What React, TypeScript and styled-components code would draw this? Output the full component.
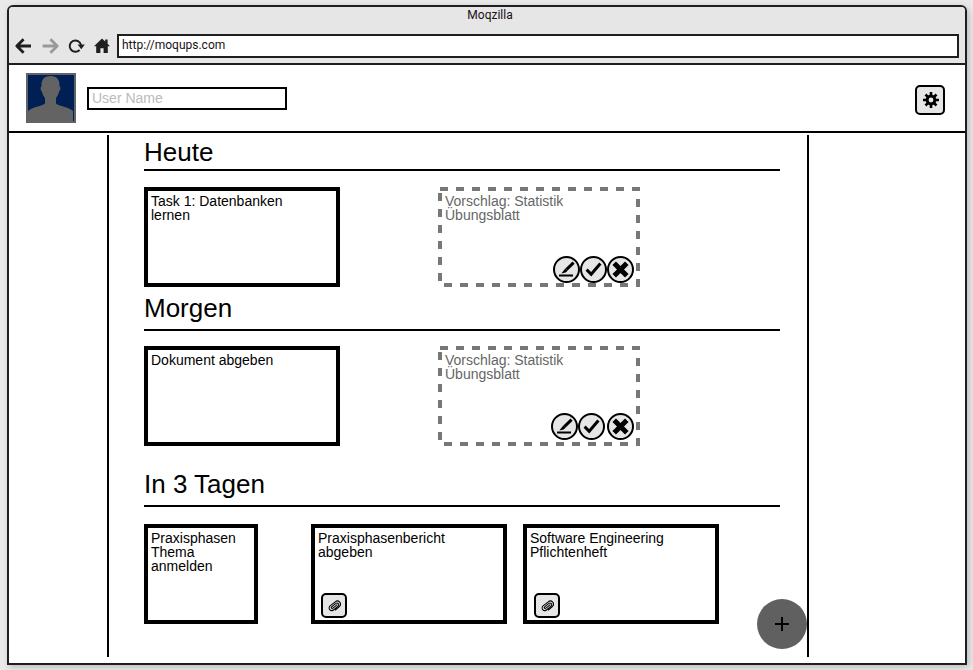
import React from "react";
import styled, { createGlobalStyle } from "styled-components";

const GlobalStyle = createGlobalStyle`
  *, *::before, *::after { box-sizing: border-box; }
  body {
    margin: 0;
    background: #e9e9e9;
    color: #000;
    font-family: "Liberation Sans", Arial, sans-serif;
    font-size: 14px;
  }
  button { padding: 0; color: inherit; font: inherit; cursor: pointer; }
`;

const Page = styled.div`
  display: flex;
  min-height: 100vh;
  padding: 5px 6px 5px 7px;
`;

const BrowserWindow = styled.div`
  flex: 1;
  display: flex;
  flex-direction: column;
  overflow: hidden;
  background: #fff;
  border: 2px solid #1f1f1f;
  border-radius: 6px 6px 0 0;
  box-shadow: 2px 2px 6px rgba(0, 0, 0, 0.2);
`;

const Chrome = styled.div`
  background: #e6e6e6;
  border-bottom: 2px solid #1f1f1f;
  font-family: Roboto, sans-serif;
  font-size: 12px;
  color: #1a1020;
`;

const WindowTitle = styled.div`
  height: 27px;
  padding-left: 6px;
  line-height: 16px;
  text-align: center;
`;

const Toolbar = styled.div`
  display: flex;
  align-items: center;
  padding: 0 6px 5px 7px;
`;

const NavButtons = styled.div`
  display: flex;
  gap: 10px;
  margin-right: 7px;
`;

const NavButton = styled.button<{ $tone?: string }>`
  display: flex;
  width: 16px;
  height: 16px;
  border: 0;
  background: none;
  color: ${(p) => p.$tone ?? "#1f1f1f"};

  svg { overflow: visible; }
`;

const AddressInput = styled.input`
  flex: 1;
  min-width: 0;
  height: 24px;
  padding: 0 3px 2px;
  border: 2px solid #1f1f1f;
  border-radius: 0;
  background: #fff;
  color: #1a1020;
  font: 12px Roboto, sans-serif;
  outline: none;
`;

const AppHeader = styled.header`
  display: flex;
  align-items: center;
  height: 68px;
  padding: 0 20px 0 17px;
  border-bottom: 2px solid #000;
`;

const Avatar = styled.svg`
  width: 50px;
  height: 50px;
  margin-right: 11px;
`;

const NameInput = styled.input`
  width: 200px;
  height: 23px;
  padding: 0 3px;
  border: 2px solid #000;
  border-radius: 0;
  background: #fff;
  font: 14px "Liberation Sans", Arial, sans-serif;
  outline: none;
  &::placeholder { color: #bbb; opacity: 1; }
`;

const SettingsButton = styled.button`
  display: grid;
  place-items: center;
  width: 30px;
  height: 30px;
  margin: 4px 0 0 auto;
  border: 2px solid #000;
  border-radius: 5px;
  background: #e6e6e6;
`;

const Main = styled.main`
  flex: 1;
  display: flex;
  padding: 2px 156px 6px 98px;
`;

const Board = styled.div`
  position: relative;
  flex: 1;
  padding: 0 27px 33px 35px;
  border: solid #000;
  border-width: 0 2px;
`;

const Heading = styled.h2<{ $above?: number; $below?: number; $gap: number }>`
  margin: 0 0 ${(p) => p.$gap}px;
  padding: ${(p) => p.$above ?? 0}px 0 ${(p) => p.$below ?? 0}px;
  border-bottom: 2px solid #000;
  font-size: 26px;
  font-weight: 400;
  line-height: 34px;
`;

const CardRow = styled.div`
  display: flex;
`;

const Card = styled.article<{ $width: number; $lead?: number }>`
  display: flex;
  flex-direction: column;
  justify-content: space-between;
  width: ${(p) => p.$width}px;
  min-height: 100px;
  margin-left: ${(p) => p.$lead ?? 0}px;
  padding: 3px 3px 2px;
  border: 4px solid #000;
`;

const dashX = "repeating-linear-gradient(90deg, #777 0 8px, transparent 8px 16px)";
const dashY = "repeating-linear-gradient(180deg, #777 0 8px, transparent 8px 16px)";

const SuggestionCard = styled(Card)`
  padding: 7px 6px 4px 7px;
  border: 0;
  color: #666;
  background:
    ${dashX} 2px 0 / 100% 4px no-repeat,
    ${dashX} 6px 100% / 100% 4px no-repeat,
    ${dashY} 0 6px / 4px 100% no-repeat,
    ${dashY} 100% 12px / 4px 100% no-repeat;
`;

const CardText = styled.p`
  max-width: 150px;
  margin: 0;
  line-height: 14px;
`;

const Actions = styled.div<{ $loose?: boolean }>`
  display: flex;
  justify-content: flex-end;
  padding-bottom: ${(p) => (p.$loose ? 2 : 0)}px;

  & > :last-child { margin-left: ${(p) => (p.$loose ? 2 : 0)}px; }
`;

const RoundButton = styled.button`
  display: grid;
  place-items: center;
  width: 27px;
  height: 27px;
  border: 2px solid #000;
  border-radius: 50%;
  background: #e6e6e6;
  color: #000;
`;

const AttachmentButton = styled.button<{ $indent: number }>`
  display: grid;
  place-items: center;
  width: 26px;
  height: 25px;
  margin-left: ${(p) => p.$indent}px;
  border: 2px solid #000;
  border-radius: 5px;
  background: #e6e6e6;
`;

const AddButton = styled.button`
  position: absolute;
  right: 0;
  bottom: 8px;
  display: grid;
  place-items: center;
  width: 50px;
  height: 50px;
  border: 0;
  border-radius: 50%;
  background: #606060;
  color: #000;
`;

const BackIcon = () => (
  <svg width="16" height="16" viewBox="0 0 16 16" fill="none" stroke="currentColor" strokeWidth="2.8">
    <path d="M15 8H1M7.6 1.2.8 8l6.8 6.8" strokeLinejoin="round" />
  </svg>
);

const ForwardIcon = () => (
  <svg width="16" height="16" viewBox="0 0 16 16" fill="none" stroke="currentColor" strokeWidth="2.8">
    <path d="M.6 8H15M8.4 1.2 15.2 8l-6.800 6.800" strokeLinejoin="round" />
  </svg>
);

const ReloadIcon = () => (
  <svg width="16" height="16" viewBox="0 0 16 16">
    <path d="M11.600 12A5.700 5.700 0 1 1 13 7" fill="none" stroke="currentColor" strokeWidth="2" />
    <path d="M9.600 6.400H16.800l-3.500 4.800z" fill="currentColor" />
  </svg>
);

const HomeIcon = () => (
  <svg width="16" height="16" viewBox="0 0 16 16" fill="currentColor">
    <path d="M8 .5 0 8.2h2.2V15H6.400v-4.800h3.200V15h4.200V8.200H16l-2.400-2.400V1.600h-2.400v2z" />
  </svg>
);

const GearIcon = () => (
  <svg width="18" height="16" viewBox="-2 0 18 16">
    <path
      d="M8 0v3.4M8 12.6V16M0 8h3.4M12.6 8H16M2.5 2.5l2.3 2.3M11.2 11.2l2.3 2.3M13.5 2.5l-2.3 2.3M4.8 11.2l-2.3 2.3"
      stroke="#000"
      strokeWidth="2.6"
    />
    <circle cx="8" cy="8" r="3.9" fill="none" stroke="#000" strokeWidth="3" />
  </svg>
);

const EditIcon = () => (
  <svg width="17" height="17" viewBox="0 0 17 17">
    <path d="M1 14.500h14" stroke="currentColor" strokeWidth="2" />
    <path d="M15.600 1.600 8.400 8.600" stroke="currentColor" strokeWidth="3" />
    <path d="M7.200 7.400 9.600 9.800 7.600 11.600 3.400 12.600z" fill="currentColor" />
  </svg>
);

const CheckIcon = () => (
  <svg width="17" height="17" viewBox="0 0 17 17" fill="none" stroke="currentColor" strokeWidth="3">
    <path d="M1.6 8.6 6.2 13.2 15.4 2.6" />
  </svg>
);

const CrossIcon = () => (
  <svg width="17" height="17" viewBox="0 0 17 17" fill="none" stroke="currentColor" strokeWidth="5">
    <path d="M2.2 2.2l12.6 12.6M14.8 2.2 2.2 14.8" />
  </svg>
);

const ClipIcon = () => (
  <svg width="14" height="14" viewBox="0 0 16 16" fill="none" stroke="#000" strokeWidth="1.2" strokeLinecap="round">
    <path
      transform="rotate(6 8 8)"
      d="M11.2 6.4 7 10.6a1 1 0 0 1-1.6-1.4l4.4-4.3a2 2 0 0 1 2.9 2.8l-4.9 4.9a3 3 0 0 1-4.3-4.2l5.4-5.3a3.6 3.6 0 0 1 5.3 4.9L10 12.4"
    />
  </svg>
);

const PlusIcon = () => (
  <svg width="16" height="16" viewBox="0 0 16 16" stroke="currentColor" strokeWidth="2">
    <path d="M1 8h14M8 1v14" />
  </svg>
);

function Suggestion({ loose }: { loose?: boolean }) {
  return (
    <SuggestionCard $width={202} $lead={98}>
      <CardText>Vorschlag: Statistik Übungsblatt</CardText>
      <Actions $loose={loose}>
        <RoundButton aria-label="Bearbeiten"><EditIcon /></RoundButton>
        <RoundButton aria-label="Annehmen"><CheckIcon /></RoundButton>
        <RoundButton aria-label="Ablehnen"><CrossIcon /></RoundButton>
      </Actions>
    </SuggestionCard>
  );
}

export default function App() {
  return (
    <>
      <GlobalStyle />
      <Page>
        <BrowserWindow>
          <Chrome>
            <WindowTitle>Moqzilla</WindowTitle>
            <Toolbar>
              <NavButtons>
                <NavButton aria-label="Zurück"><BackIcon /></NavButton>
                <NavButton aria-label="Vorwärts" $tone="#999"><ForwardIcon /></NavButton>
                <NavButton aria-label="Neu laden"><ReloadIcon /></NavButton>
                <NavButton aria-label="Startseite"><HomeIcon /></NavButton>
              </NavButtons>
              <AddressInput aria-label="Adresse" defaultValue="http://moqups.com" />
            </Toolbar>
          </Chrome>
          <AppHeader>
            <Avatar viewBox="0 0 50 50" role="img" aria-label="Profilbild">
              <path d="M1 1h48v48H1z" fill="#001f55" stroke="#606368" strokeWidth="2" />
              <path
                d="M24.500 3c-6.500 0-9.500 4-9 10.500-1.500 0-1 4 .6 5.500.6 3 1.600 4.500 2.900 6v5.500c-1.500 2.500-12 3-17 7.500v11h45V38c-5-4.500-15.500-5-17-7.500V25c1.300-1.500 2.300-3 2.900-6 1.600-1.500 2.100-5.500.6-5.500C34 7 31 3 24.500 3z"
                fill="#636363"
              />
            </Avatar>
            <NameInput aria-label="User Name" placeholder="User Name" />
            <SettingsButton aria-label="Einstellungen"><GearIcon /></SettingsButton>
          </AppHeader>
          <Main>
            <Board>
              <section>
                <Heading $gap={16}>Heute</Heading>
                <CardRow>
                  <Card $width={196}><CardText>Task 1: Datenbanken lernen</CardText></Card>
                  <Suggestion />
                </CardRow>
              </section>
              <section>
                <Heading $above={4} $below={4} $gap={15}>Morgen</Heading>
                <CardRow>
                  <Card $width={196}><CardText>Dokument abgeben</CardText></Card>
                  <Suggestion loose />
                </CardRow>
              </section>
              <section>
                <Heading $above={21} $below={4} $gap={17}>In 3 Tagen</Heading>
                <CardRow>
                  <Card $width={114}><CardText>Praxisphasen Thema anmelden</CardText></Card>
                  <Card $width={196} $lead={53}>
                    <CardText>Praxisphasenbericht abgeben</CardText>
                    <AttachmentButton $indent={3} aria-label="Anhang"><ClipIcon /></AttachmentButton>
                  </Card>
                  <Card $width={196} $lead={16}>
                    <CardText>Software Engineering Pflichtenheft</CardText>
                    <AttachmentButton $indent={4} aria-label="Anhang"><ClipIcon /></AttachmentButton>
                  </Card>
                </CardRow>
              </section>
              <AddButton aria-label="Aufgabe hinzufügen"><PlusIcon /></AddButton>
            </Board>
          </Main>
        </BrowserWindow>
      </Page>
    </>
  );
}
